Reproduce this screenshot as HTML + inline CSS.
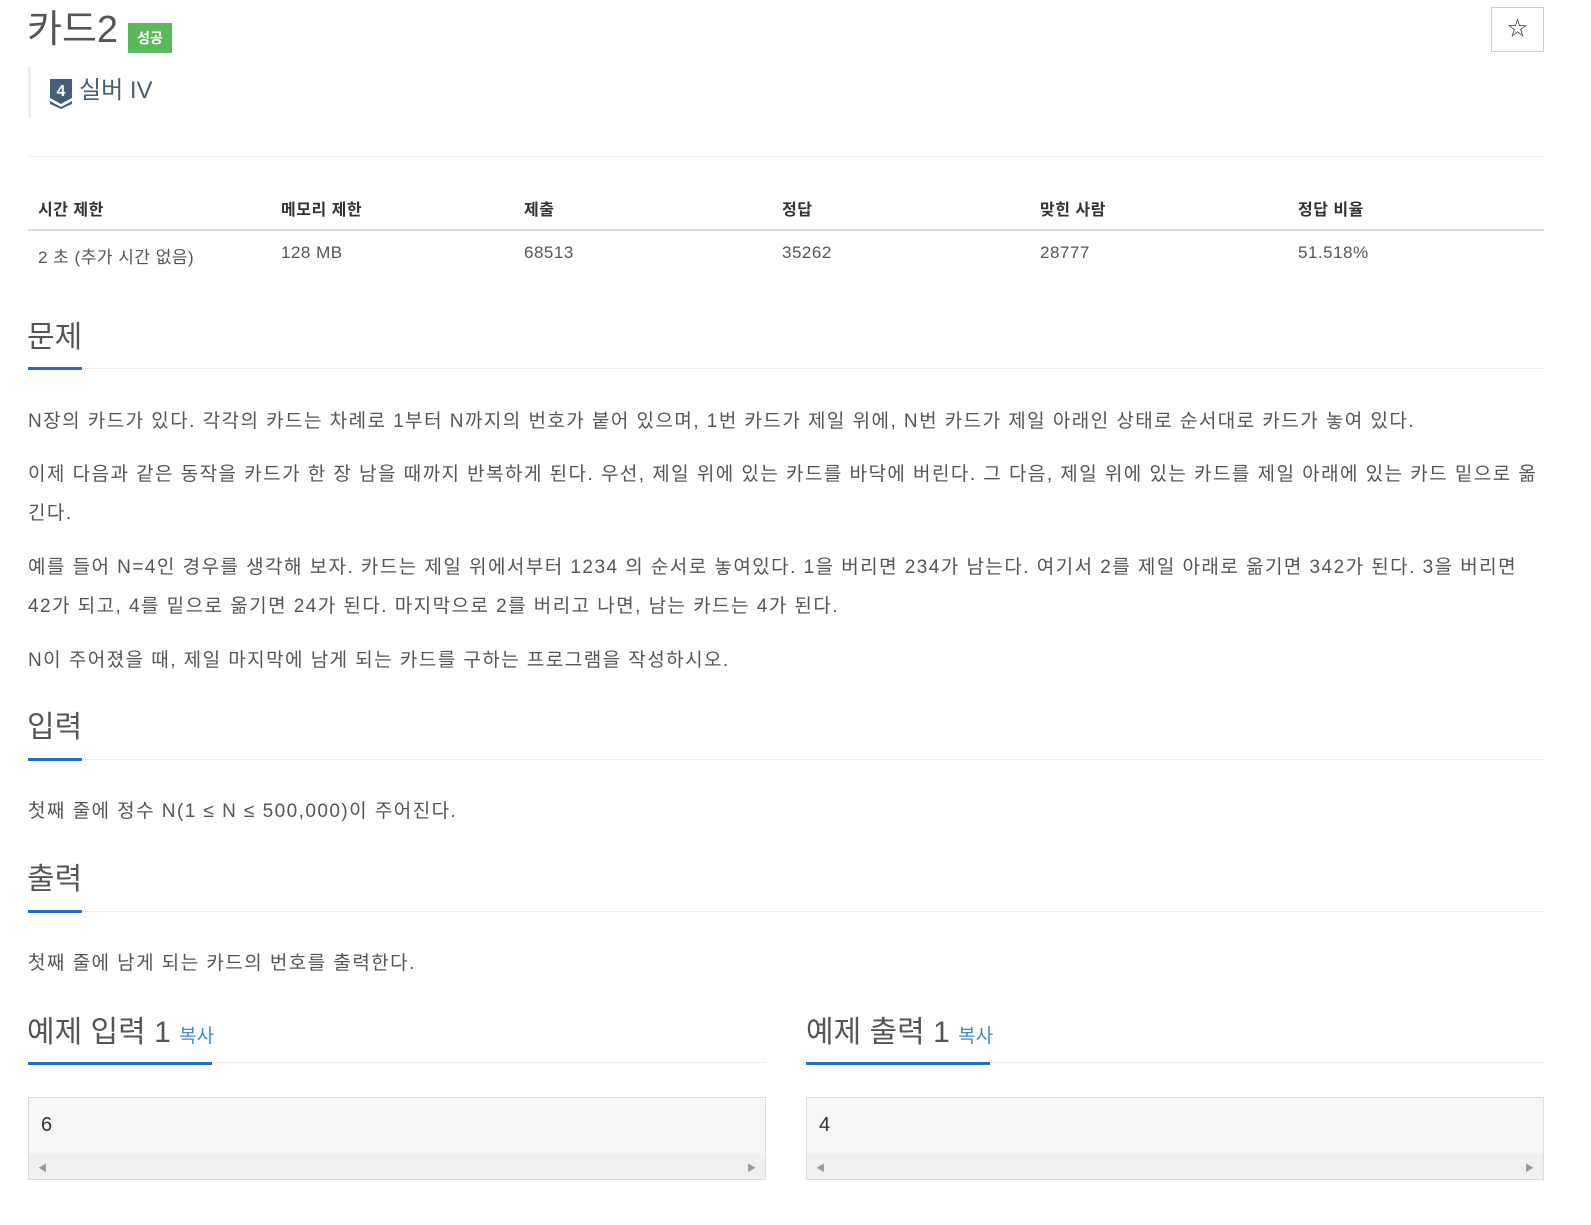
<!DOCTYPE html>
<html><head><meta charset="utf-8"><style>
*{margin:0;padding:0;box-sizing:border-box}
body{width:1591px;height:1225px;background:#fff;font-family:"Liberation Sans","Noto Sans CJK KR",sans-serif;color:#555;position:relative;overflow:hidden}
.a{position:absolute;white-space:nowrap}
.p{font-size:19px;color:#555;line-height:39px;letter-spacing:1.45px}
.h{font-size:30px;color:#555;line-height:40px}
.dot{position:absolute;height:0;border-top:1px dotted #ddd}
.ul{position:absolute;height:3px;background:#1f6fbf}
.th{font-size:16px;font-weight:bold;color:#333;letter-spacing:0.5px}
.td{font-size:17px;color:#555;letter-spacing:0.5px}
.box{position:absolute;background:#f6f6f8;border:1px solid #dcdce0;height:83px}
.sb{position:absolute;left:0;right:0;bottom:0;height:25px;background:#f0f0f0}
</style></head><body>
<div class="a" style="left:27px;top:8px;font-size:38px;color:#555;line-height:44px">카드2</div>
<div class="a" style="left:128px;top:23px;width:44px;height:30px;background:#5cb85c;color:#fff;font-size:14px;font-weight:bold;text-align:center;line-height:30px">성공</div>
<div class="a" style="left:1491px;top:7px;width:53px;height:45px;border:1px solid #ccc;text-align:center;line-height:42px;font-size:20px;color:#333">☆</div>
<div class="a" style="left:28px;top:67px;width:3px;height:51px;background:#eee"></div>
<svg class="a" style="left:50px;top:79px" width="23" height="30" viewBox="0 0 23 30"><path d="M0 0H22V19L11 25L0 19Z" fill="#435f7a"/><path d="M0 22L11 28L22 22V25L11 30L0 25Z" fill="#435f7a"/><text x="11" y="17" font-size="16" font-weight="bold" fill="#fff" text-anchor="middle" font-family="Liberation Sans">4</text></svg>
<div class="a" style="left:79px;top:76px;font-size:24px;color:#435f7a;line-height:30px">실버 IV</div>
<div class="a" style="left:28px;top:156px;width:1516px;height:1px;background:#eee"></div>
<div class="a th" style="left:38px;top:196px">시간 제한</div>
<div class="a th" style="left:281px;top:196px">메모리 제한</div>
<div class="a th" style="left:524px;top:196px">제출</div>
<div class="a th" style="left:782px;top:196px">정답</div>
<div class="a th" style="left:1040px;top:196px">맞힌 사람</div>
<div class="a th" style="left:1298px;top:196px">정답 비율</div>
<div class="a" style="left:28px;top:229px;width:1516px;height:2px;background:#ddd"></div>
<div class="a td" style="left:38px;top:243px">2 초 (추가 시간 없음)</div>
<div class="a td" style="left:281px;top:243px">128 MB</div>
<div class="a td" style="left:524px;top:243px">68513</div>
<div class="a td" style="left:782px;top:243px">35262</div>
<div class="a td" style="left:1040px;top:243px">28777</div>
<div class="a td" style="left:1298px;top:243px">51.518%</div>

<div class="a h" style="left:27px;top:318px">문제</div>
<div class="dot" style="left:28px;top:368px;width:1516px"></div>
<div class="ul" style="left:28px;top:367px;width:54px"></div>
<div class="a p" style="left:28px;top:402px">N장의 카드가 있다. 각각의 카드는 차례로 1부터 N까지의 번호가 붙어 있으며, 1번 카드가 제일 위에, N번 카드가 제일 아래인 상태로 순서대로 카드가 놓여 있다.</div>
<div class="a p" style="left:28px;top:455px">이제 다음과 같은 동작을 카드가 한 장 남을 때까지 반복하게 된다. 우선, 제일 위에 있는 카드를 바닥에 버린다. 그 다음, 제일 위에 있는 카드를 제일 아래에 있는 카드 밑으로 옮</div>
<div class="a p" style="left:28px;top:494px">긴다.</div>
<div class="a p" style="left:28px;top:548px">예를 들어 N=4인 경우를 생각해 보자. 카드는 제일 위에서부터 1234 의 순서로 놓여있다. 1을 버리면 234가 남는다. 여기서 2를 제일 아래로 옮기면 342가 된다. 3을 버리면</div>
<div class="a p" style="left:28px;top:587px">42가 되고, 4를 밑으로 옮기면 24가 된다. 마지막으로 2를 버리고 나면, 남는 카드는 4가 된다.</div>
<div class="a p" style="left:28px;top:641px">N이 주어졌을 때, 제일 마지막에 남게 되는 카드를 구하는 프로그램을 작성하시오.</div>

<div class="a h" style="left:27px;top:708px">입력</div>
<div class="dot" style="left:28px;top:759px;width:1516px"></div>
<div class="ul" style="left:28px;top:758px;width:54px"></div>
<div class="a p" style="left:28px;top:792px">첫째 줄에 정수 N(1 ≤ N ≤ 500,000)이 주어진다.</div>

<div class="a h" style="left:27px;top:860px">출력</div>
<div class="dot" style="left:28px;top:911px;width:1516px"></div>
<div class="ul" style="left:28px;top:910px;width:54px"></div>
<div class="a p" style="left:28px;top:944px">첫째 줄에 남게 되는 카드의 번호를 출력한다.</div>

<div class="a h" style="left:27px;top:1013px">예제 입력 1 <span style="font-size:19px;color:#428bca">복사</span></div>
<div class="dot" style="left:28px;top:1062px;width:738px"></div>
<div class="ul" style="left:28px;top:1062px;width:184px"></div>
<div class="a h" style="left:806px;top:1013px">예제 출력 1 <span style="font-size:19px;color:#428bca">복사</span></div>
<div class="dot" style="left:806px;top:1062px;width:738px"></div>
<div class="ul" style="left:806px;top:1062px;width:184px"></div>

<div class="box" style="left:28px;top:1097px;width:738px"><div class="a" style="left:12px;top:16px;font-size:20px;color:#333">6</div><div class="sb"><span class="a" style="left:9px;top:7px;font-size:9px;color:#999">◀</span><span class="a" style="right:9px;top:7px;font-size:9px;color:#999">▶</span></div></div>
<div class="box" style="left:806px;top:1097px;width:738px"><div class="a" style="left:12px;top:16px;font-size:20px;color:#333">4</div><div class="sb"><span class="a" style="left:9px;top:7px;font-size:9px;color:#999">◀</span><span class="a" style="right:9px;top:7px;font-size:9px;color:#999">▶</span></div></div>
</body></html>
